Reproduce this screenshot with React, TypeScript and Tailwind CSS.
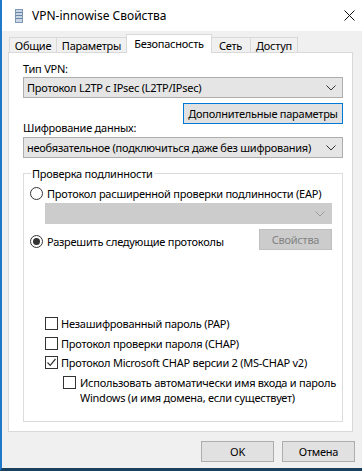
import React from "react";

function Chevron({ color = "#333" }: { color?: string }) {
  return (
    <svg width="10" height="6" viewBox="0 0 10 6" className="shrink-0">
      <path d="M0.5 0.5 L5 5 L9.5 0.5" stroke={color} strokeWidth="1" fill="none" />
    </svg>
  );
}

function Radio({ checked }: { checked?: boolean }) {
  return (
    <div className="w-[13px] h-[13px] rounded-full border border-[#333] bg-white flex items-center justify-center shrink-0">
      {checked && <div className="w-[7px] h-[7px] rounded-full bg-[#333]" />}
    </div>
  );
}

function Check({ checked }: { checked?: boolean }) {
  return (
    <div className="w-[13px] h-[13px] border border-[#333] bg-white flex items-center justify-center shrink-0">
      {checked && (
        <svg width="11" height="11" viewBox="0 0 11 11">
          <path d="M1.5 5.5 L4.2 8.3 L9.5 2" stroke="#333" strokeWidth="1.2" fill="none" />
        </svg>
      )}
    </div>
  );
}

function Tab({ label, w, first }: { label: string; w: string; first?: boolean }) {
  return (
    <div
      className={`${w} h-[15px] mb-[1px] bg-[#f0f0f0] border-t border-r border-[#d9d9d9] ${
        first ? "border-l" : ""
      } flex items-center justify-center leading-none`}
    >
      {label}
    </div>
  );
}

export default function App() {
  return (
    <div className="w-[362px] h-[471px] bg-[#f0f0f0] border-l-[2px] border-l-[#1f78c8] border-b-[3px] border-b-[#1b3f5e] flex flex-col overflow-hidden font-['Noto_Sans',sans-serif] text-[11px] tracking-[-0.25px] whitespace-nowrap text-black">
      {/* Title bar */}
      <div className="h-[31px] bg-white flex items-center pl-[13px] shrink-0">
        <svg width="8" height="14" viewBox="0 0 8 14" className="shrink-0">
          <rect x="0" y="0" width="8" height="14" fill="#7d97b5" />
          <rect x="1" y="1" width="6" height="12" fill="#c9d6e6" />
          <rect x="1" y="3" width="6" height="1" fill="#6a86a8" />
          <rect x="1" y="6" width="6" height="1" fill="#6a86a8" />
          <rect x="1" y="9" width="6" height="1" fill="#6a86a8" />
        </svg>
        <span className="ml-[9px] text-[12px] tracking-normal leading-none">VPN-innowise Свойства</span>
        <svg width="11" height="11" viewBox="0 0 11 11" className="ml-auto mr-[7px]">
          <path d="M0.5 0.5 L10.5 10.5 M10.5 0.5 L0.5 10.5" stroke="#111" strokeWidth="1" />
        </svg>
      </div>

      {/* Tabs */}
      <div className="flex items-end h-[19px] mt-[3px] ml-[7px] relative z-10 shrink-0">
        <Tab label="Общие" w="w-[48px]" first />
        <Tab label="Параметры" w="w-[70px]" />
        <div className="w-[86px] h-[19px] -ml-[1px] -mr-[1px] bg-white border-t border-l border-r border-[#d9d9d9] flex items-start justify-center pt-[2px] leading-none relative">
          <span className="mt-[1px]">Безопасность</span>
        </div>
        <Tab label="Сеть" w="w-[40px]" />
        <Tab label="Доступ" w="w-[47px]" />
      </div>

      {/* Panel */}
      <div className="ml-[6px] w-[345px] h-[380px] -mt-px bg-white border border-[#d9d9d9] pl-[14px] pr-[9px] flex flex-col shrink-0">
        <div className="mt-[8px] h-[15px] leading-[15px]">Тип VPN:</div>
        <div className="mt-[1px] h-[21px] border border-[#adadad] bg-[#e5e5e5] flex items-center justify-between pl-[3px] pr-[6px]">
          <span className="leading-none">Протокол L2TP с IPsec (L2TP/IPsec)</span>
          <Chevron />
        </div>
        <div className="mt-[5px] self-end w-[160px] h-[21px] border border-[#0078d7] bg-[#e1e1e1] flex items-center justify-center leading-none">
          Дополнительные параметры
        </div>
        <div className="-mt-[4px] h-[15px] leading-[15px]">Шифрование данных:</div>
        <div className="mt-[2px] h-[21px] border border-[#adadad] bg-[#e5e5e5] flex items-center justify-between pl-[3px] pr-[6px]">
          <span className="leading-none">необязательное (подключиться даже без шифрования)</span>
          <Chevron />
        </div>

        {/* Group box */}
        <div className="mt-[15px] h-[249px] border border-[#dcdcdc] relative flex flex-col">
          <div className="absolute -top-[8px] left-[7px] bg-white px-[1px] leading-[15px]">
            Проверка подлинности
          </div>
          <div className="mt-[11px] h-[16px] flex items-center pl-[6px] gap-[4px]">
            <Radio />
            <span className="leading-none">Протокол расширенной проверки подлинности (EAP)</span>
          </div>
          <div className="mt-[2px] ml-[21px] w-[287px] h-[21px] border border-[#cccccc] bg-[#cccccc] flex items-center justify-end pr-[6px]">
            <Chevron color="#9a9a9a" />
          </div>
          <div className="mt-[5px] h-[21px] flex items-center justify-between pl-[6px] pr-[10px]">
            <div className="flex items-center gap-[4px] mt-[3px]">
              <Radio checked />
              <span className="leading-none">Разрешить следующие протоколы</span>
            </div>
            <div className="w-[73px] h-[21px] border border-[#bfbfbf] bg-[#cccccc] text-[#838383] flex items-center justify-center leading-none">
              Свойства
            </div>
          </div>

          <div className="mt-[63px] flex flex-col pl-[21px]">
            <div className="h-[20px] flex items-center gap-[3px]">
              <Check />
              <span className="leading-none">Незашифрованный пароль (PAP)</span>
            </div>
            <div className="h-[20px] flex items-center gap-[3px]">
              <Check />
              <span className="leading-none">Протокол проверки пароля (CHAP)</span>
            </div>
            <div className="h-[19px] flex items-center gap-[3px]">
              <Check checked />
              <span className="leading-none">Протокол Microsoft CHAP версии 2 (MS-CHAP v2)</span>
            </div>
            <div className="mt-[3px] ml-[18px] flex items-start gap-[4px]">
              <div className="mt-[1px]">
                <Check />
              </div>
              <span className="leading-[15px]">
                Использовать автоматически имя входа и пароль
                <br />
                Windows (и имя домена, если существует)
              </span>
            </div>
          </div>
        </div>
      </div>

      {/* Buttons */}
      <div className="mt-[9px] flex justify-end gap-[8px] pr-[7px]">
        <div className="w-[73px] h-[21px] border border-[#adadad] bg-[#e1e1e1] flex items-center justify-center leading-none">
          OK
        </div>
        <div className="w-[73px] h-[21px] border border-[#adadad] bg-[#e1e1e1] flex items-center justify-center leading-none">
          Отмена
        </div>
      </div>
    </div>
  );
}
